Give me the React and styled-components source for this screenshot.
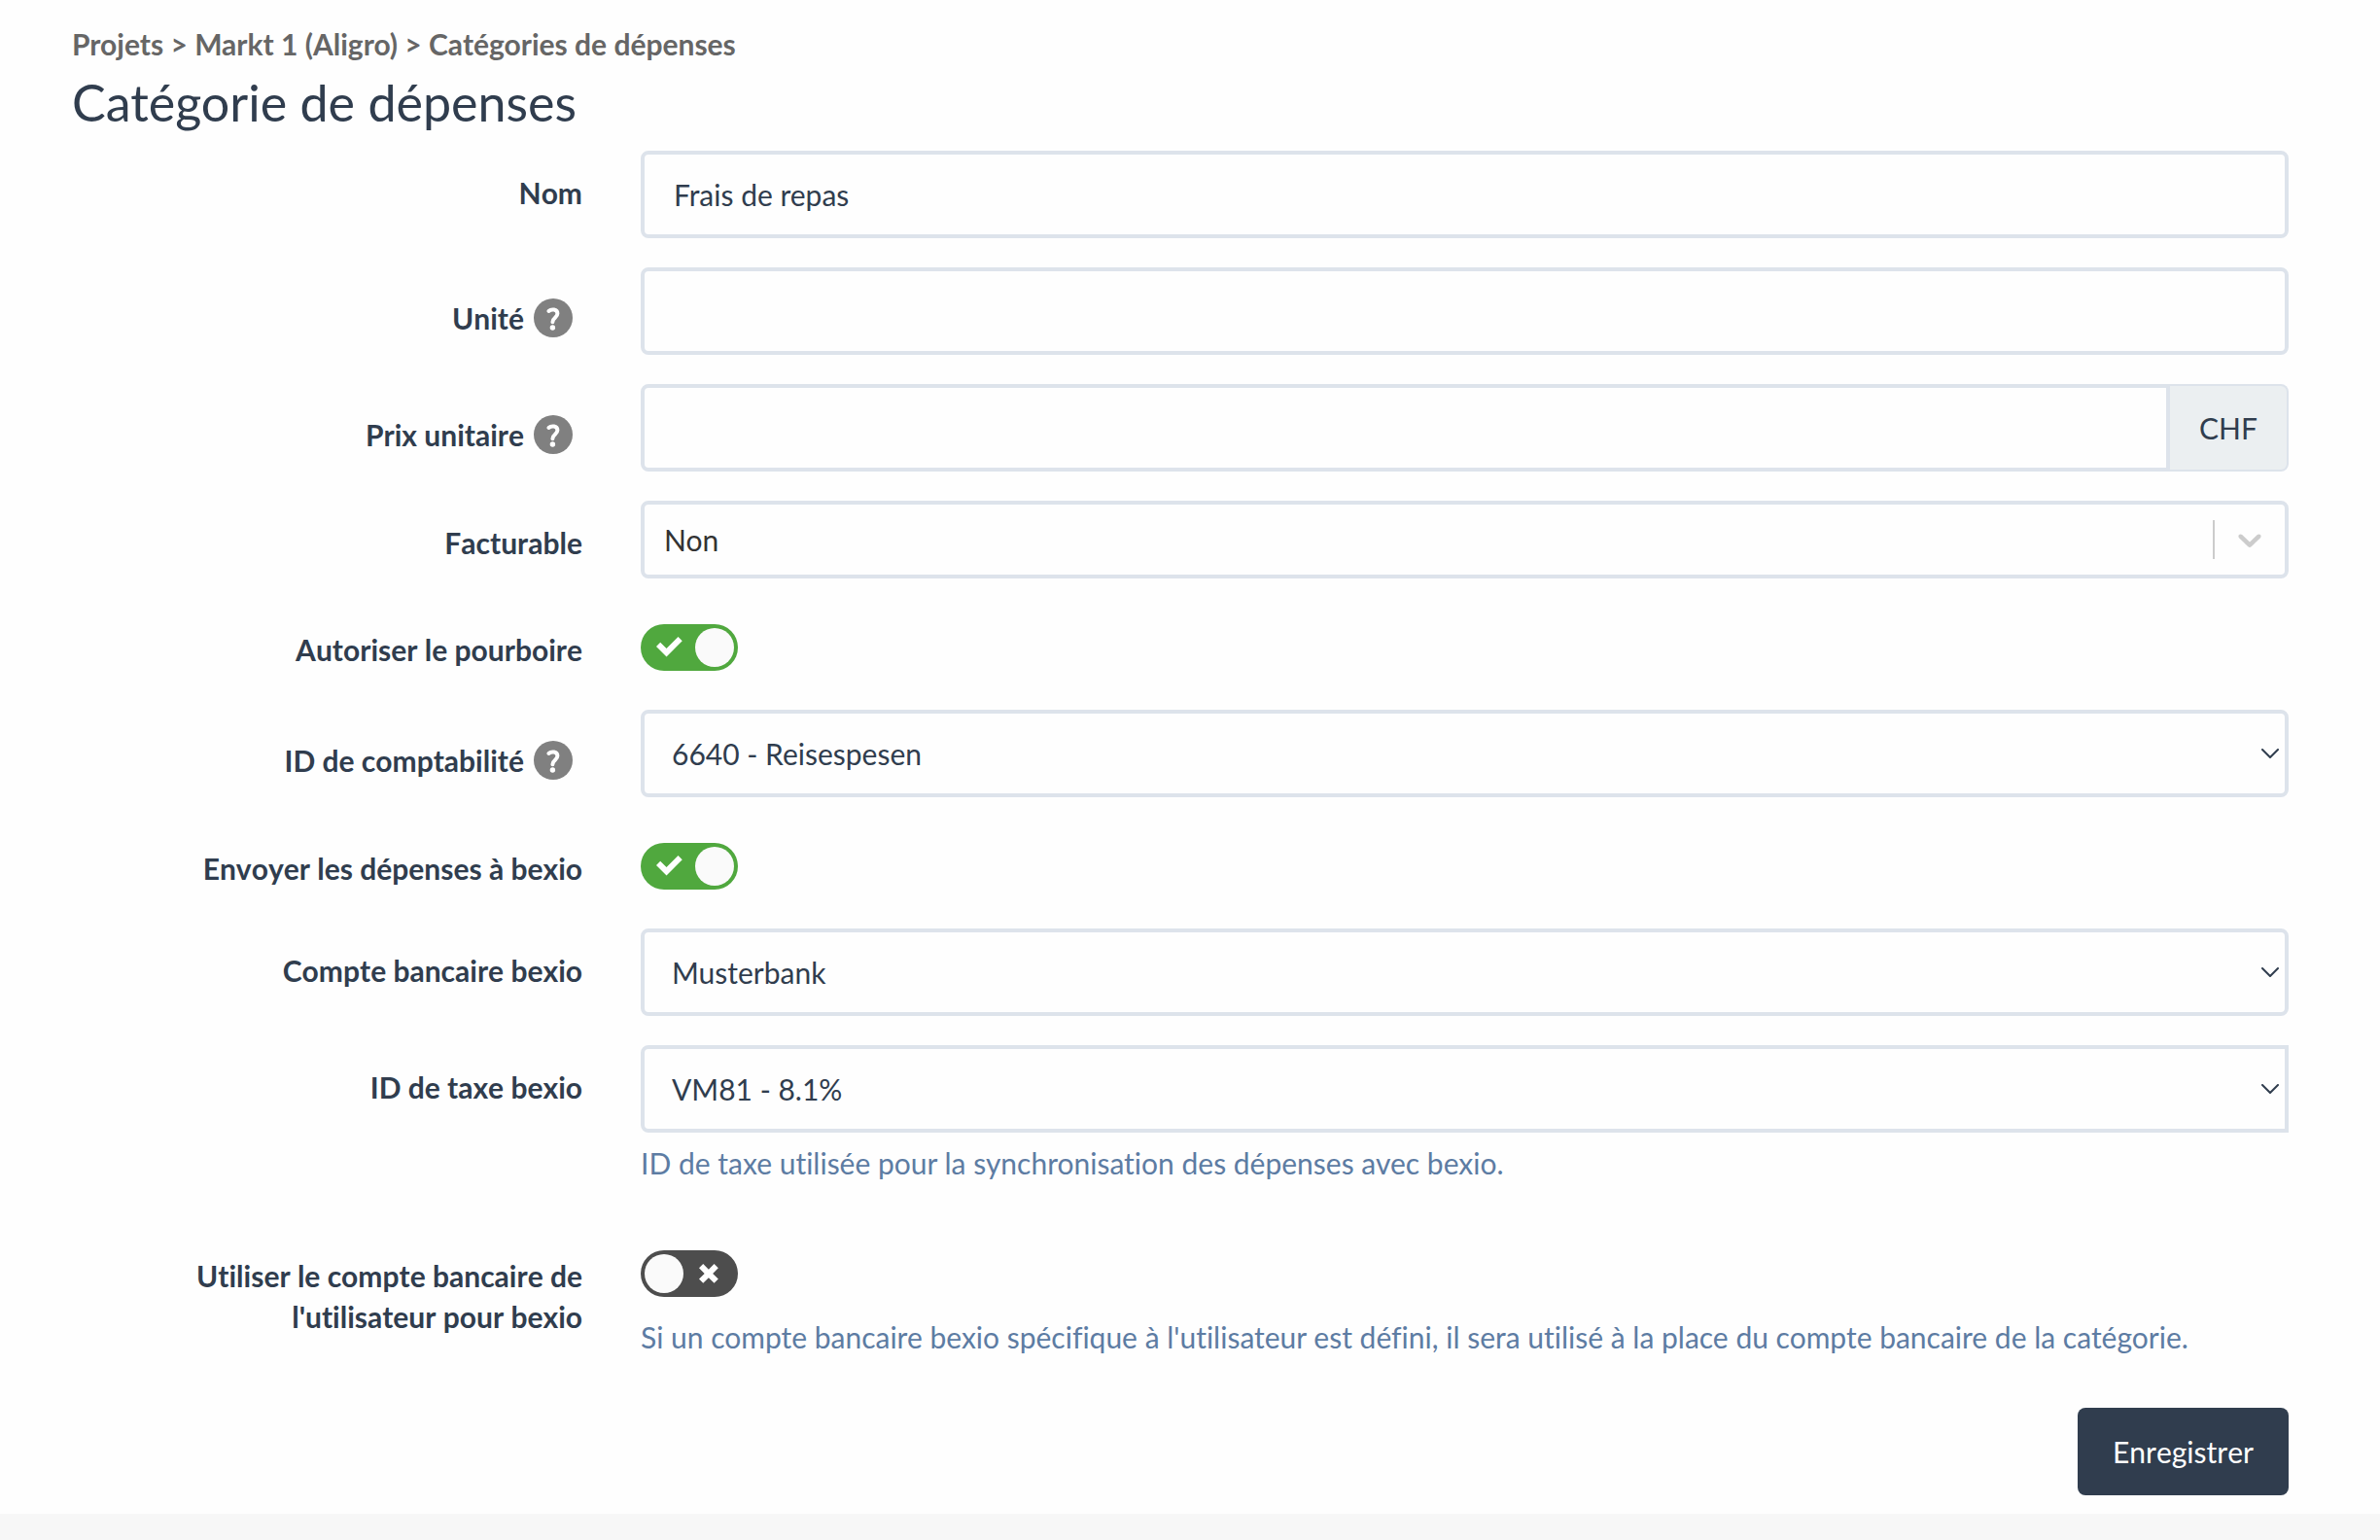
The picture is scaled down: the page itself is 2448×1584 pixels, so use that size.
import React from "react";
import styled, { createGlobalStyle } from "styled-components";

const GlobalStyle = createGlobalStyle`
  * {
    box-sizing: border-box;
  }
  body {
    margin: 0;
    background: #f7f7f7;
    color: #303d4e;
    font-family: Lato, "Liberation Sans", sans-serif;
    font-size: 30px;
    line-height: 42px;
    font-variant-ligatures: no-common-ligatures;
  }
`;

const Page = styled.main`
  padding: 24px 64px 19px 44px;
  background: #fefefe;
`;

const Header = styled.header`
  padding: 0 30px;
`;

const Breadcrumb = styled.nav`
  color: #666;
  font-weight: 700;
`;

const Crumb = styled.a`
  color: inherit;
  text-decoration: none;
`;

const Title = styled.h1`
  margin: 6px 0 17px;
  font-size: 52px;
  font-weight: 400;
  line-height: 66px;
`;

const Form = styled.form`
  display: flex;
  flex-direction: column;
  gap: 30px;
`;

const Row = styled.div`
  display: grid;
  grid-template-columns: 25% 75%;
`;

const LabelCell = styled.div`
  display: flex;
  justify-content: flex-end;
  align-items: center;
  align-self: start;
  gap: 10px;
  padding: ${(p) => (p.$help ? "31px 40px 0 30px" : "22px 30px 0")};
`;

const Label = styled.label`
  font-weight: 700;
  font-kerning: none;
  text-align: right;
`;

const HelpButton = styled.button`
  display: flex;
  width: 40px;
  height: 40px;
  padding: 0;
  border: 0;
  border-radius: 50%;
  background: none;
`;

const Control = styled.div`
  min-width: 0;
  padding: 0 30px;
`;

const Input = styled.input`
  display: block;
  width: 100%;
  min-width: 0;
  height: 90px;
  padding: 0 30px;
  border: 4px solid #dde3eb;
  border-radius: ${(p) => (p.$grouped ? "8px 0 0 8px" : "8px")};
  background: #fefefe;
  color: inherit;
  font: inherit;
`;

const InputGroup = styled.div`
  display: flex;
`;

const Addon = styled.span`
  display: flex;
  align-items: center;
  padding: 0 30px;
  border: 2px solid #dde3eb;
  border-left: 0;
  border-radius: 0 8px 8px 0;
  background: #ebeff1;
`;

// the select and its arrow share one grid cell
const SelectBox = styled.div`
  display: grid;
  align-items: center;

  > * {
    grid-area: 1 / 1;
  }
`;

const Select = styled.select`
  width: 100%;
  height: ${(p) => (p.$compact ? "80px" : "90px")};
  padding: 0 ${(p) => (p.$compact ? "20px" : "28px")};
  border: 4px solid #dde3eb;
  border-radius: ${(p) => (p.$square ? "8px 0 0 8px" : "8px")};
  background: #fefefe;
  color: ${(p) => (p.$compact ? "#333" : "inherit")};
  font: inherit;
  appearance: none;
`;

const Arrow = styled.span`
  display: flex;
  justify-self: end;
  margin-right: 10px;
  pointer-events: none;
`;

const Indicator = styled.span`
  display: flex;
  justify-self: end;
  margin-right: 4px;
  padding: 0 16px;
  border-left: 2px solid #ccc;
  pointer-events: none;
`;

const ToggleBox = styled.div`
  display: flex;
  min-height: 75px;
  padding-top: 17px;
`;

const Track = styled.label`
  display: flex;
  align-items: center;
  justify-content: space-between;
  width: 100px;
  height: 48px;
  padding: ${(p) => (p.$on ? "0 4px 0 16px" : "0 20px 0 4px")};
  border-radius: 24px;
  background: ${(p) => (p.$on ? "#50a83e" : "#4d4d4d")};
`;

const HiddenCheckbox = styled.input`
  position: absolute;
  width: 1px;
  height: 1px;
  margin: 0;
  opacity: 0;
`;

const Thumb = styled.span`
  width: 40px;
  height: 40px;
  border-radius: 50%;
  background: #fafafa;
`;

const Hint = styled.p`
  margin: 10px 0 22px;
  color: #5d7ca3;
`;

const Actions = styled.div`
  display: flex;
  justify-content: flex-end;
  padding: 0 30px;
`;

const SaveButton = styled.button`
  height: 90px;
  padding: 0 36px;
  border: 0;
  border-radius: 8px;
  background: #303d4e;
  color: #fff;
  font: inherit;
  font-kerning: none;
`;

const Field = ({ id, label, help, children }) => (
  <Row>
    <LabelCell $help={help}>
      <Label htmlFor={id}>{label}</Label>
      {help && (
        <HelpButton type="button" aria-label={`Aide : ${label}`}>
          <svg width="40" height="40" viewBox="0 0 40 40" fill="none">
            <circle cx="20" cy="20" r="20" fill="#808080" />
            <path
              d="M15.4 13C18 10.6 24.4 10.6 24.4 15.6C24.4 19.8 19.4 19.6 19.4 24.2"
              stroke="#fff"
              strokeWidth="4"
              strokeLinecap="round"
            />
            <circle cx="19.4" cy="30" r="2.7" fill="#fff" />
          </svg>
        </HelpButton>
      )}
    </LabelCell>
    <Control>{children}</Control>
  </Row>
);

const NativeSelect = ({ id, value, square }) => (
  <SelectBox>
    <Select id={id} $square={square}>
      <option>{value}</option>
    </Select>
    <Arrow>
      <svg width="18" height="10" viewBox="0 0 18 10" fill="none">
        <path
          d="M1 1L9 9L17 1"
          stroke="#303d4e"
          strokeWidth="2"
          strokeLinecap="round"
          strokeLinejoin="round"
        />
      </svg>
    </Arrow>
  </SelectBox>
);

const Toggle = ({ id, defaultOn }) => {
  const [on, setOn] = React.useState(defaultOn);

  return (
    <Track $on={on}>
      <HiddenCheckbox
        id={id}
        type="checkbox"
        checked={on}
        onChange={(e) => setOn(e.target.checked)}
      />
      {on && (
        <svg width="28" height="22" viewBox="0 0 14 11">
          <path
            d="M11.264 0L5.26 6.004 2.103 2.847 0 4.95l5.26 5.26 8.108-8.107L11.264 0"
            fill="#fff"
          />
        </svg>
      )}
      <Thumb />
      {!on && (
        <svg width="20" height="20" viewBox="0 0 10 10">
          <path
            d="M9.9 2.12L7.78 0 4.95 2.828 2.12 0 0 2.12l2.83 2.83L0 7.776 2.123 9.9 4.95 7.07 7.78 9.9 9.9 7.776 7.072 4.95 9.9 2.12"
            fill="#fff"
          />
        </svg>
      )}
    </Track>
  );
};

const App = () => {
  return (
    <>
      <GlobalStyle />
      <Page>
        <Header>
          <Breadcrumb>
            <Crumb href="#projets">Projets</Crumb> &gt;{" "}
            <Crumb href="#markt">Markt 1 (Aligro)</Crumb> &gt;{" "}
            <Crumb href="#categories">Catégories de dépenses</Crumb>
          </Breadcrumb>
          <Title>Catégorie de dépenses</Title>
        </Header>

        <Form onSubmit={(e) => e.preventDefault()}>
          <Field id="name" label="Nom">
            <Input id="name" type="text" defaultValue="Frais de repas" />
          </Field>

          <Field id="unit" label="Unité" help>
            <Input id="unit" type="text" />
          </Field>

          <Field id="price" label="Prix unitaire" help>
            <InputGroup>
              <Input id="price" type="text" $grouped />
              <Addon>CHF</Addon>
            </InputGroup>
          </Field>

          <Field id="billable" label="Facturable">
            <SelectBox>
              <Select id="billable" $compact>
                <option>Non</option>
              </Select>
              <Indicator>
                <svg width="40" height="40" viewBox="0 0 20 20" fill="#ccc">
                  <path d="M4.516 7.548c0.436-0.446 1.043-0.481 1.576 0l3.908 3.747 3.908-3.747c0.533-0.481 1.141-0.446 1.574 0 0.436 0.445 0.408 1.197 0 1.615-0.406 0.418-4.695 4.502-4.695 4.502-0.217 0.223-0.502 0.335-0.787 0.335s-0.57-0.112-0.789-0.335c0 0-4.287-4.084-4.695-4.502s-0.436-1.17 0-1.615z" />
                </svg>
              </Indicator>
            </SelectBox>
          </Field>

          <Field id="tip" label="Autoriser le pourboire">
            <ToggleBox>
              <Toggle id="tip" defaultOn />
            </ToggleBox>
          </Field>

          <Field id="accounting" label="ID de comptabilité" help>
            <NativeSelect id="accounting" value="6640 - Reisespesen" />
          </Field>

          <Field id="send" label="Envoyer les dépenses à bexio">
            <ToggleBox>
              <Toggle id="send" defaultOn />
            </ToggleBox>
          </Field>

          <Field id="bank" label="Compte bancaire bexio">
            <NativeSelect id="bank" value="Musterbank" />
          </Field>

          <Field id="tax" label="ID de taxe bexio">
            <NativeSelect id="tax" value="VM81 - 8.1%" square />
            <Hint>ID de taxe utilisée pour la synchronisation des dépenses avec bexio.</Hint>
          </Field>

          <Field
            id="userbank"
            label="Utiliser le compte bancaire de l'utilisateur pour bexio"
          >
            <ToggleBox>
              <Toggle id="userbank" defaultOn={false} />
            </ToggleBox>
            <Hint>
              Si un compte bancaire bexio spécifique à l'utilisateur est défini, il sera utilisé
              à la place du compte bancaire de la catégorie.
            </Hint>
          </Field>

          <Actions>
            <SaveButton type="submit">Enregistrer</SaveButton>
          </Actions>
        </Form>
      </Page>
    </>
  );
};

export default App;
